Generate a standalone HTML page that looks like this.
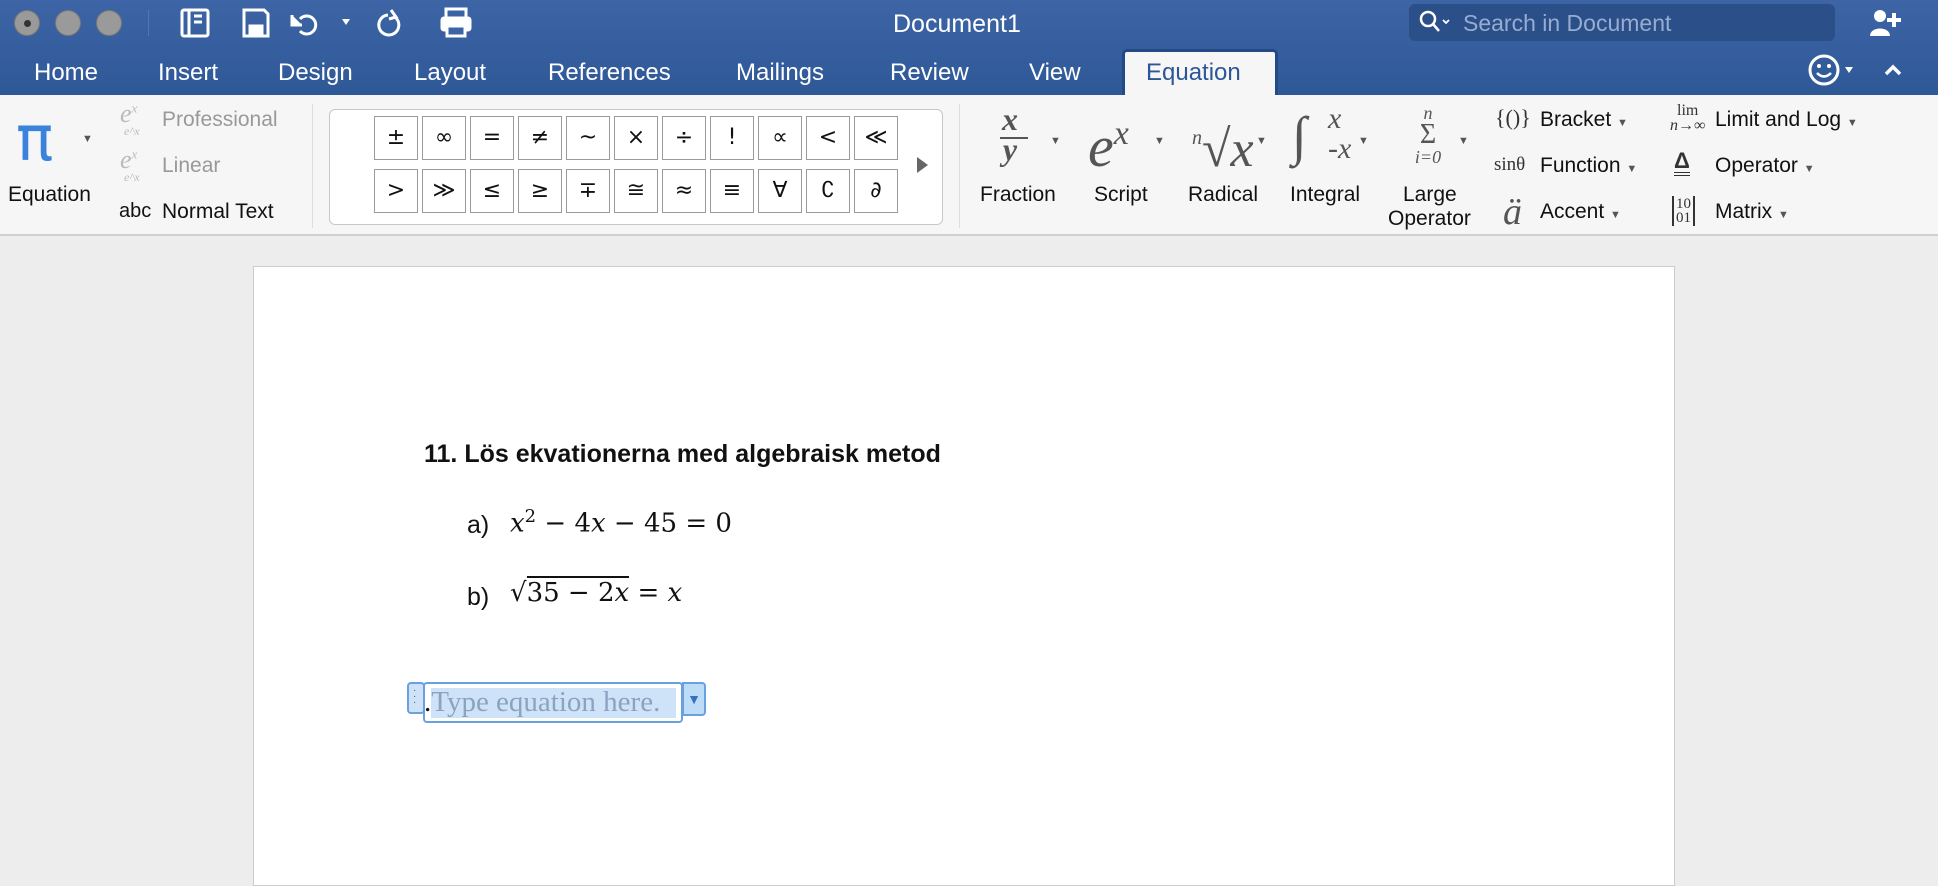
<!DOCTYPE html>
<html><head><meta charset="utf-8"><style>
*{margin:0;padding:0;box-sizing:border-box}
body{width:1938px;height:866px;overflow:hidden;background:#ededed;font-family:"Liberation Sans",sans-serif;position:relative}
.a{position:absolute;white-space:nowrap}
#hdr{position:absolute;left:0;top:0;width:1938px;height:95px;background:linear-gradient(#3d65a6,#2f5897)}
.tab{position:absolute;top:59px;color:#fff;font-size:24px}
.tl{position:absolute;top:10px;width:26px;height:26px;border-radius:50%;background:#9a9a9a;border:1px solid #777}
#rib{position:absolute;left:0;top:95px;width:1938px;height:141px;background:#f6f6f6;border-bottom:2px solid #d0d0d0}
.lbl{font-size:21px;color:#111}
.sb{position:absolute;width:44px;height:44px;border:1px solid #9a9a9a;background:#fff;font-size:22px;text-align:center;line-height:42px;color:#111;font-family:"DejaVu Sans",sans-serif}
.car{font-size:11px;color:#555}
.mi{font-family:"Liberation Serif",serif;font-style:italic;color:#555}
.doc{font-family:"DejaVu Serif","Liberation Serif",serif;font-size:26px;color:#111}
</style></head><body>
<div id="hdr"></div>
<div class="tl" style="left:14px"></div><div class="a" style="left:24px;top:20px;width:7px;height:7px;border-radius:50%;background:#333"></div>
<div class="tl" style="left:55px"></div><div class="tl" style="left:96px"></div>
<div class="a" style="left:148px;top:10px;width:1px;height:26px;background:#5577aa"></div>
<svg class="a" style="left:180px;top:7px" width="450" height="32" viewBox="0 0 450 32" fill="none" stroke="#fff" stroke-width="3">
<rect x="2" y="3" width="26" height="26" rx="2"/><line x1="9" y1="3" x2="9" y2="29"/><path d="M14 9h8M14 15h8"/>
<path d="M64 3h20l4 4v22h-24z"/><rect x="70" y="19" width="12" height="10" fill="#fff"/>
<path d="M120 12a9 9 0 1 1 0 12" /><path d="M112 8v10h10" fill="#fff"/>
<path d="M162 12l8 0-4 6z" fill="#fff" stroke="none"/>
<path d="M208 8a10 10 0 1 0 8 3"/><path d="M211 3l5 7-7 2" />
<rect x="266" y="2" width="20" height="9"/><rect x="262" y="11" width="28" height="12" rx="2" fill="#fff"/><rect x="267" y="19" width="18" height="10" fill="#3d65a6"/>
</svg>
<div class="a" style="left:893px;top:10px;color:#fff;font-size:25px">Document1</div>
<div class="a" style="left:1409px;top:4px;width:426px;height:37px;border-radius:6px;background:#2b4f88"></div>
<svg class="a" style="left:1418px;top:9px" width="40" height="28" fill="none" stroke="#fff" stroke-width="2.5"><circle cx="10" cy="10" r="7"/><path d="M15 15l6 7"/><path d="M25 11l3 3 3-3" stroke-width="1.8"/></svg>
<div class="a" style="left:1463px;top:10px;color:#97acd0;font-size:23px">Search in Document</div>
<svg class="a" style="left:1868px;top:8px" width="36" height="28"><circle cx="12" cy="8" r="6" fill="#fff"/><path d="M2 28c0-10 20-10 20 0z" fill="#fff"/><path d="M26 5v14M19 12h14" stroke="#fff" stroke-width="4"/></svg>
<div class="tab" style="left:34px">Home</div>
<div class="tab" style="left:158px">Insert</div>
<div class="tab" style="left:278px">Design</div>
<div class="tab" style="left:414px">Layout</div>
<div class="tab" style="left:548px">References</div>
<div class="tab" style="left:736px">Mailings</div>
<div class="tab" style="left:890px">Review</div>
<div class="tab" style="left:1029px">View</div>
<div class="a" style="left:1122px;top:49px;width:156px;height:48px;background:#f6f6f6;border:3px solid #244a86;border-bottom:none;border-radius:5px 5px 0 0"></div>
<div class="tab" style="left:1146px;color:#2b5797">Equation</div>
<svg class="a" style="left:1808px;top:54px" width="100" height="32"><circle cx="16" cy="16" r="14" stroke="#fff" stroke-width="3" fill="none"/><circle cx="11" cy="12" r="2" fill="#fff"/><circle cx="21" cy="12" r="2" fill="#fff"/><path d="M9 19q7 7 14 0" stroke="#fff" stroke-width="2.5" fill="none"/><path d="M37 13l8 0-4 6z" fill="#fff"/><path d="M78 20l7-7 7 7" stroke="#fff" stroke-width="3.5" fill="none"/></svg>

<div id="rib"></div>
<div class="a" style="left:16px;top:102px;font-family:'DejaVu Sans',sans-serif;font-size:62px;color:#3a82dc">π</div>
<div class="a car" style="left:82px;top:133px">▼</div>
<div class="a lbl" style="left:8px;top:183px">Equation</div>
<div class="a mi" style="left:120px;top:99px;font-size:26px;color:#bbb">e<sup style="font-size:13px">x</sup></div>
<div class="a mi" style="left:124px;top:124px;font-size:12px;color:#bbb">e^x</div>
<div class="a mi" style="left:120px;top:145px;font-size:26px;color:#bbb">e<sup style="font-size:13px">x</sup></div>
<div class="a mi" style="left:124px;top:170px;font-size:12px;color:#bbb">e^x</div>
<div class="a lbl" style="left:162px;top:108px;color:#999">Professional</div>
<div class="a lbl" style="left:162px;top:154px;color:#999">Linear</div>
<div class="a lbl" style="left:119px;top:200px;font-size:20px">abc</div>
<div class="a lbl" style="left:162px;top:200px">Normal Text</div>
<div class="a" style="left:312px;top:104px;width:1px;height:124px;background:#ddd"></div>
<div class="a" style="left:329px;top:109px;width:614px;height:116px;background:#fff;border:1px solid #c8c8c8;border-radius:6px"></div>
<div class="sb" style="left:374px;top:116px">±</div><div class="sb" style="left:422px;top:116px">∞</div><div class="sb" style="left:470px;top:116px">=</div><div class="sb" style="left:518px;top:116px">≠</div><div class="sb" style="left:566px;top:116px">~</div><div class="sb" style="left:614px;top:116px">×</div><div class="sb" style="left:662px;top:116px">÷</div><div class="sb" style="left:710px;top:116px">!</div><div class="sb" style="left:758px;top:116px">∝</div><div class="sb" style="left:806px;top:116px">&lt;</div><div class="sb" style="left:854px;top:116px">≪</div>
<div class="sb" style="left:374px;top:169px">&gt;</div><div class="sb" style="left:422px;top:169px">≫</div><div class="sb" style="left:470px;top:169px">≤</div><div class="sb" style="left:518px;top:169px">≥</div><div class="sb" style="left:566px;top:169px">∓</div><div class="sb" style="left:614px;top:169px">≅</div><div class="sb" style="left:662px;top:169px">≈</div><div class="sb" style="left:710px;top:169px">≡</div><div class="sb" style="left:758px;top:169px">∀</div><div class="sb" style="left:806px;top:169px">∁</div><div class="sb" style="left:854px;top:169px">∂</div>
<div class="a" style="left:917px;top:157px;width:0;height:0;border-left:11px solid #666;border-top:8px solid transparent;border-bottom:8px solid transparent"></div>
<div class="a" style="left:959px;top:104px;width:1px;height:124px;background:#ddd"></div>

<div class="a mi" style="left:1002px;top:104px;font-size:32px;font-weight:bold;line-height:30px;text-align:center">x<br>y</div>
<div class="a" style="left:1000px;top:137px;width:28px;height:2px;background:#555"></div>
<div class="a car" style="left:1050px;top:135px">▼</div>
<div class="a mi" style="left:1088px;top:104px;font-size:58px;line-height:60px">e<sup style="font-size:34px;vertical-align:22px">x</sup></div>
<div class="a car" style="left:1154px;top:135px">▼</div>
<div class="a mi" style="left:1192px;top:110px;font-size:52px;line-height:56px"><sup style="font-size:20px;vertical-align:22px">n</sup><span style="font-style:normal">√</span>x</div>
<div class="a car" style="left:1256px;top:135px">▼</div>
<div class="a mi" style="left:1292px;top:108px;font-size:54px;line-height:56px">∫</div>
<div class="a mi" style="left:1328px;top:104px;font-size:30px;line-height:30px">x<br>-x</div>
<div class="a car" style="left:1358px;top:135px">▼</div>
<div class="a mi" style="left:1408px;top:104px;font-size:18px;line-height:18px;text-align:center;width:40px">n<br><span style="font-style:normal;font-size:28px;line-height:26px">Σ</span><br>i=0</div>
<div class="a car" style="left:1458px;top:135px">▼</div>
<div class="a lbl" style="left:980px;top:183px">Fraction</div>
<div class="a lbl" style="left:1094px;top:183px">Script</div>
<div class="a lbl" style="left:1188px;top:183px">Radical</div>
<div class="a lbl" style="left:1290px;top:183px">Integral</div>
<div class="a lbl" style="left:1403px;top:183px">Large</div>
<div class="a lbl" style="left:1388px;top:207px">Operator</div>

<div class="a" style="left:1495px;top:105px;font-family:'Liberation Serif',serif;font-size:22px;color:#333">{()}</div>
<div class="a lbl" style="left:1540px;top:108px">Bracket <span class="car">▼</span></div>
<div class="a" style="left:1494px;top:154px;font-family:'Liberation Serif',serif;font-size:19px;color:#333">sinθ</div>
<div class="a lbl" style="left:1540px;top:154px">Function <span class="car">▼</span></div>
<div class="a mi" style="left:1503px;top:190px;font-size:38px;color:#555">ä</div>
<div class="a lbl" style="left:1540px;top:200px">Accent <span class="car">▼</span></div>
<div class="a" style="left:1670px;top:103px;font-family:'Liberation Serif',serif;font-size:16px;line-height:15px;color:#333;text-align:center">lim<br><i>n</i>→∞</div>
<div class="a lbl" style="left:1715px;top:108px">Limit and Log <span class="car">▼</span></div>
<div class="a" style="left:1674px;top:150px;font-family:'Liberation Sans',sans-serif;font-weight:bold;font-size:22px;color:#333;border-bottom:4px double #333;line-height:22px">Δ</div>
<div class="a lbl" style="left:1715px;top:154px">Operator <span class="car">▼</span></div>
<div class="a" style="left:1672px;top:196px;font-family:'Liberation Serif',serif;font-size:15px;line-height:14px;color:#333;border-left:2px solid #333;border-right:2px solid #333;padding:1px 2px">10<br>01</div>
<div class="a lbl" style="left:1715px;top:200px">Matrix <span class="car">▼</span></div>

<div class="a" style="left:253px;top:266px;width:1422px;height:620px;background:#fff;border:1px solid #ccc"></div>
<div class="a" style="left:424px;top:440px;font-family:'Liberation Sans',sans-serif;font-weight:bold;font-size:25px;color:#111">11. Lös ekvationerna med algebraisk metod</div>
<div class="a" style="left:467px;top:511px;font-size:25px;color:#111">a)</div>
<div class="a doc" style="left:510px;top:506px"><i>x</i><sup style="font-size:18px">2</sup> − 4<i>x</i> − 45 = 0</div>
<div class="a" style="left:467px;top:583px;font-size:25px;color:#111">b)</div>
<div class="a doc" style="left:510px;top:578px">√<span style="border-top:2px solid #111">35 − 2<i>x</i></span> = <i>x</i></div>
<div class="a" style="left:407px;top:682px;width:18px;height:32px;background:#cfe3f8;border:2px solid #6aa0e0;border-radius:4px"></div>
<div class="a" style="left:413px;top:688px;font-size:10px;line-height:6px;color:#456">·<br>·<br>·</div>
<div class="a" style="left:423px;top:682px;width:260px;height:41px;background:#fff;border:2px solid #6aa0e0;border-radius:4px"></div>
<div class="a" style="left:431px;top:688px;width:245px;height:30px;background:#cfe3f8"></div>
<div class="a" style="left:424px;top:686px;font-family:'Liberation Serif',serif;font-size:29px;color:#8aa3c0"><span style="color:#111">.</span>Type equation here.</div>
<div class="a" style="left:682px;top:682px;width:24px;height:34px;background:#bddcf8;border:2px solid #6aa0e0;border-radius:0 4px 4px 0;color:#3a6fc0;font-size:14px;text-align:center;line-height:30px">▼</div>
</body></html>
